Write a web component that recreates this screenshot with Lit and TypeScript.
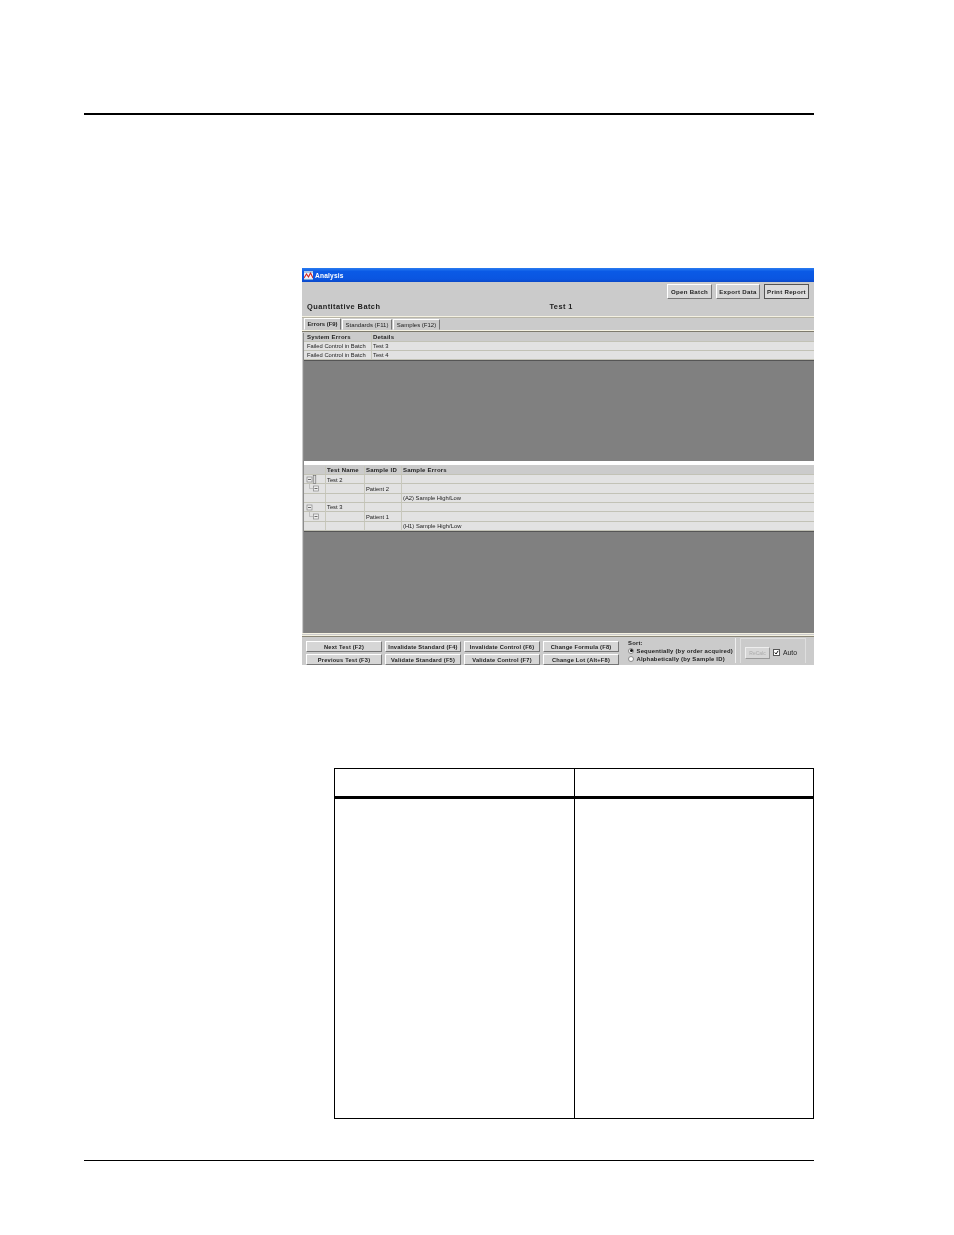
import { LitElement, html, css, svg } from "lit";
import { customElement } from "lit/decorators.js";

const minus = (x: number, y: number) => svg`<g fill="none" stroke="#888" stroke-width=".7"><rect x="${x}" y="${y}" width="5" height="5" fill="#eee"/><path d="M${x + 1} ${y + 2.5}h3" stroke="#333"/></g>`;

@customElement("app-root")
export class AppRoot extends LitElement {
  static styles = css`
    :host { display: block; width: 954px; height: 1235px; background: #fff; font-family: "Liberation Sans", Arial, sans-serif; overflow: hidden; }
    .rule-top { height: 2px; width: 730px; margin: 113px 0 0 84px; background: #000; }
    .win { width: 512px; height: 397px; margin: 153px 0 0 302px; background: #cbcbcb; display: flex; flex-direction: column; color: #222; font-size: 5.8px; filter: blur(0.35px); overflow: hidden; }
    .title { height: 14px; flex: none; background: linear-gradient(#2a7cf0, #0a5ae6 25%, #0a55e0 80%, #0a48c8); display: flex; align-items: center; padding-left: 2px; gap: 2px; color: #fff; font-weight: bold; font-size: 6.6px; letter-spacing: .2px; }
    .toolbar { height: 18px; flex: none; display: flex; justify-content: flex-end; align-items: center; gap: 4px; padding-right: 5px; box-sizing: border-box; }
    .btn { display: flex; align-items: center; justify-content: center; background: #d6d6d6; border: 1px solid; border-color: #fff #777 #777 #fff; box-sizing: border-box; font-weight: bold; font-size: 5.9px; letter-spacing: .25px; white-space: nowrap; color: #222; }
    .toolbar .btn { width: 45px; height: 15px; font-size: 6.1px; letter-spacing: .3px; }
    .toolbar .btn.narrow { width: 44px; }
    .toolbar .focus { border-color: #555; background: #dcdcdc; }
    .heading { height: 16px; flex: none; display: flex; align-items: center; box-sizing: border-box; padding: 0 0 3px 5px; font-weight: bold; font-size: 7.4px; letter-spacing: .45px; }
    .heading .t2 { margin-left: 169px; }
    .sep { height: 2px; flex: none; background: linear-gradient(#f4f1e2 50%, #b8b5a6 50%); }
    .tabs { height: 12px; flex: none; display: flex; gap: 1px; padding-left: 2px; align-items: flex-end; }
    .tab { height: 11px; display: flex; align-items: center; justify-content: center; border: 1px solid; border-color: #fff #777 transparent #fff; box-sizing: border-box; font-size: 6px; white-space: nowrap; }
    .tab.on { height: 12px; font-weight: bold; width: 37px; font-size: 5.9px; }
    .tab.std { width: 50px; }
    .tab.smp { width: 47px; }
    .sep2 { height: 2px; flex: none; background: linear-gradient(#f4f1e2 50%, #7d7a6c 50%); }
    .panel { flex: 1; min-height: 0; display: flex; flex-direction: column; margin: 1px 0 0 1px; border-left: 1px solid #8b8b8b; }
    .grid { flex: none; }
    .row { display: grid; height: 9px; box-sizing: border-box; border-bottom: 1px solid #c2c2b6; background: #e2e2e2; align-items: center; }
    .lower .row:not(.head) { height: 9.33px; }
    .row > div { height: 100%; display: flex; align-items: center; padding-left: 1px; border-right: 1px solid #c8c8bc; box-sizing: border-box; white-space: nowrap; min-width: 0; }
    .row > div:last-child { border-right: none; }
    .row.head { background: #cbcbcb; font-weight: bold; font-size: 6px; letter-spacing: .22px; }
    .upper .row { grid-template-columns: 68px 1fr; }
    .upper .row > div:first-child { padding-left: 3px; }
    .lower .row { grid-template-columns: 22px 39px 37px 1fr; }
    .fill { background: #808080; flex: none; height: 101px; border-top: 1px solid #555; box-sizing: border-box; }
    .fill.tall { height: 102px; }
    .mid { height: 5px; flex: none; background: linear-gradient(#fff 80%, #cbcbcb 80%); }
    .mid2 { height: 4px; flex: none; margin-top: auto; background: linear-gradient(#f4f1e2 25%, #cbcbcb 25%, #cbcbcb 50%, #f4f1e2 50%, #f4f1e2 75%, #8b8778 75%); }
    .treecell { position: relative; padding: 0 !important; }
    .treecell svg { display: block; width: 21px; height: 9px; }
    .bottom { height: 28px; flex: none; display: flex; padding: 4px 0 0 4px; box-sizing: border-box; }
    .btns { display: grid; grid-template-columns: 76px 76px 76px 76px; grid-auto-rows: 11px; row-gap: 2px; column-gap: 3px; }
    .btns .btn { font-size: 5.7px; letter-spacing: .2px; }
    .sort { margin-left: 3px; width: 114px; height: 25px; margin-top: -3px; padding: 1px 0 0 6px; box-sizing: border-box; font-weight: bold; font-size: 5.9px; letter-spacing: .2px; border-right: 1px solid #eee; }
    .sort-label { height: 7.5px; display: flex; align-items: center; }
    .radio { display: flex; align-items: center; gap: 2.5px; height: 8px; white-space: nowrap; }
    .dot { width: 6px; height: 6px; border-radius: 50%; background: #fff; border: .5px solid #888; box-sizing: border-box; display: flex; align-items: center; justify-content: center; flex: none; }
    .dot i { width: 3px; height: 3px; border-radius: 50%; background: #111; display: block; }
    .recalc { margin-left: 4px; width: 66px; height: 25px; margin-top: -3px; display: flex; align-items: center; padding: 3px 0 0 4px; gap: 3px; box-sizing: border-box; border: 1px solid #dedede; border-bottom: none; font-size: 6.8px; }
    .rc { width: 25px; height: 12px; background: #d6d6d6; border: 1px solid; border-color: #eee #999 #999 #eee; box-sizing: border-box; color: #aaa; font-size: 5px; display: flex; align-items: center; justify-content: center; }
    .check { width: 7px; height: 7px; background: #fff; border: .5px solid #555; box-sizing: border-box; display: flex; flex: none; }
    .check svg { width: 100%; height: 100%; display: block; }
    .table { width: 480px; height: 351px; margin: 103px 0 0 334px; border: 1px solid #000; box-sizing: border-box; display: grid; grid-template-columns: 240px 1fr; grid-template-rows: 30px 1fr; }
    .table > div { box-sizing: border-box; }
    .th { border-bottom: 3px solid #000; }
    .c1 { border-right: 1px solid #000; }
    .rule-bottom { height: 1px; width: 730px; margin: 41px 0 0 84px; background: #000; }
  `;

  render() {
    return html`
      <div class="rule-top"></div>
      <div class="win">
        <div class="title">
          <svg width="9" height="9" viewBox="0 0 9 9"><rect width="9" height="9" fill="#eef2fa"/><path d="M0 7 2.5 3 4.5 6 6.5 2 9 7" fill="none" stroke="#c22" stroke-width="1.1"/><path d="M0 1h9M0 8.4h9" stroke="#48c" stroke-width=".8"/></svg>
          <span>Analysis</span>
        </div>
        <div class="toolbar">
          <div class="btn">Open Batch</div>
          <div class="btn narrow">Export Data</div>
          <div class="btn focus">Print Report</div>
        </div>
        <div class="heading"><span>Quantitative Batch</span><span class="t2">Test 1</span></div>
        <div class="sep"></div>
        <div class="tabs">
          <div class="tab on">Errors (F9)</div>
          <div class="tab std">Standards (F11)</div>
          <div class="tab smp">Samples (F12)</div>
        </div>
        <div class="sep2"></div>
        <div class="panel">
          <div class="grid upper">
            <div class="row head"><div>System Errors</div><div>Details</div></div>
            <div class="row"><div>Failed Control in Batch</div><div>Test 3</div></div>
            <div class="row"><div>Failed Control in Batch</div><div>Test 4</div></div>
          </div>
          <div class="fill"></div>
          <div class="mid"></div>
          <div class="grid lower">
            <div class="row head"><div></div><div>Test Name</div><div>Sample ID</div><div>Sample Errors</div></div>
            <div class="row"><div class="treecell"><svg viewBox="0 0 21 9">${minus(3, 2)}<rect x="9.2" y="0.5" width="2.6" height="8" fill="#ddd" stroke="#666" stroke-width=".6"/></svg></div><div>Test 2</div><div></div><div></div></div>
            <div class="row"><div class="treecell"><svg viewBox="0 0 21 9"><path d="M5.5 0v4.5H9.5" fill="none" stroke="#aaa" stroke-width=".6"/>${minus(9.5, 2)}</svg></div><div></div><div>Patient 2</div><div></div></div>
            <div class="row"><div></div><div></div><div></div><div>(A2) Sample High/Low</div></div>
            <div class="row"><div class="treecell"><svg viewBox="0 0 21 9">${minus(3, 2)}</svg></div><div>Test 3</div><div></div><div></div></div>
            <div class="row"><div class="treecell"><svg viewBox="0 0 21 9"><path d="M5.5 0v4.5H9.5" fill="none" stroke="#aaa" stroke-width=".6"/>${minus(9.5, 2)}</svg></div><div></div><div>Patient 1</div><div></div></div>
            <div class="row"><div></div><div></div><div></div><div>(H1) Sample High/Low</div></div>
          </div>
          <div class="fill tall"></div>
        </div>
        <div class="mid2"></div>
        <div class="bottom">
          <div class="btns">
            <div class="btn">Next Test (F2)</div>
            <div class="btn">Invalidate Standard (F4)</div>
            <div class="btn">Invalidate Control (F6)</div>
            <div class="btn">Change Formula (F8)</div>
            <div class="btn">Previous Test (F3)</div>
            <div class="btn">Validate Standard (F5)</div>
            <div class="btn">Validate Control (F7)</div>
            <div class="btn">Change Lot (Alt+F8)</div>
          </div>
          <div class="sort">
            <div class="sort-label">Sort:</div>
            <div class="radio"><span class="dot"><i></i></span>Sequentially (by order acquired)</div>
            <div class="radio"><span class="dot"></span>Alphabetically (by Sample ID)</div>
          </div>
          <div class="recalc">
            <div class="rc">ReCalc</div>
            <span class="check"><svg viewBox="0 0 6 6"><path d="M1 3l1.5 1.8L5 1" fill="none" stroke="#000" stroke-width="1.1"/></svg></span>
            <span>Auto</span>
          </div>
        </div>
      </div>
      <div class="table">
        <div class="th c1"></div><div class="th"></div>
        <div class="c1"></div><div></div>
      </div>
      <div class="rule-bottom"></div>
    `;
  }
}
